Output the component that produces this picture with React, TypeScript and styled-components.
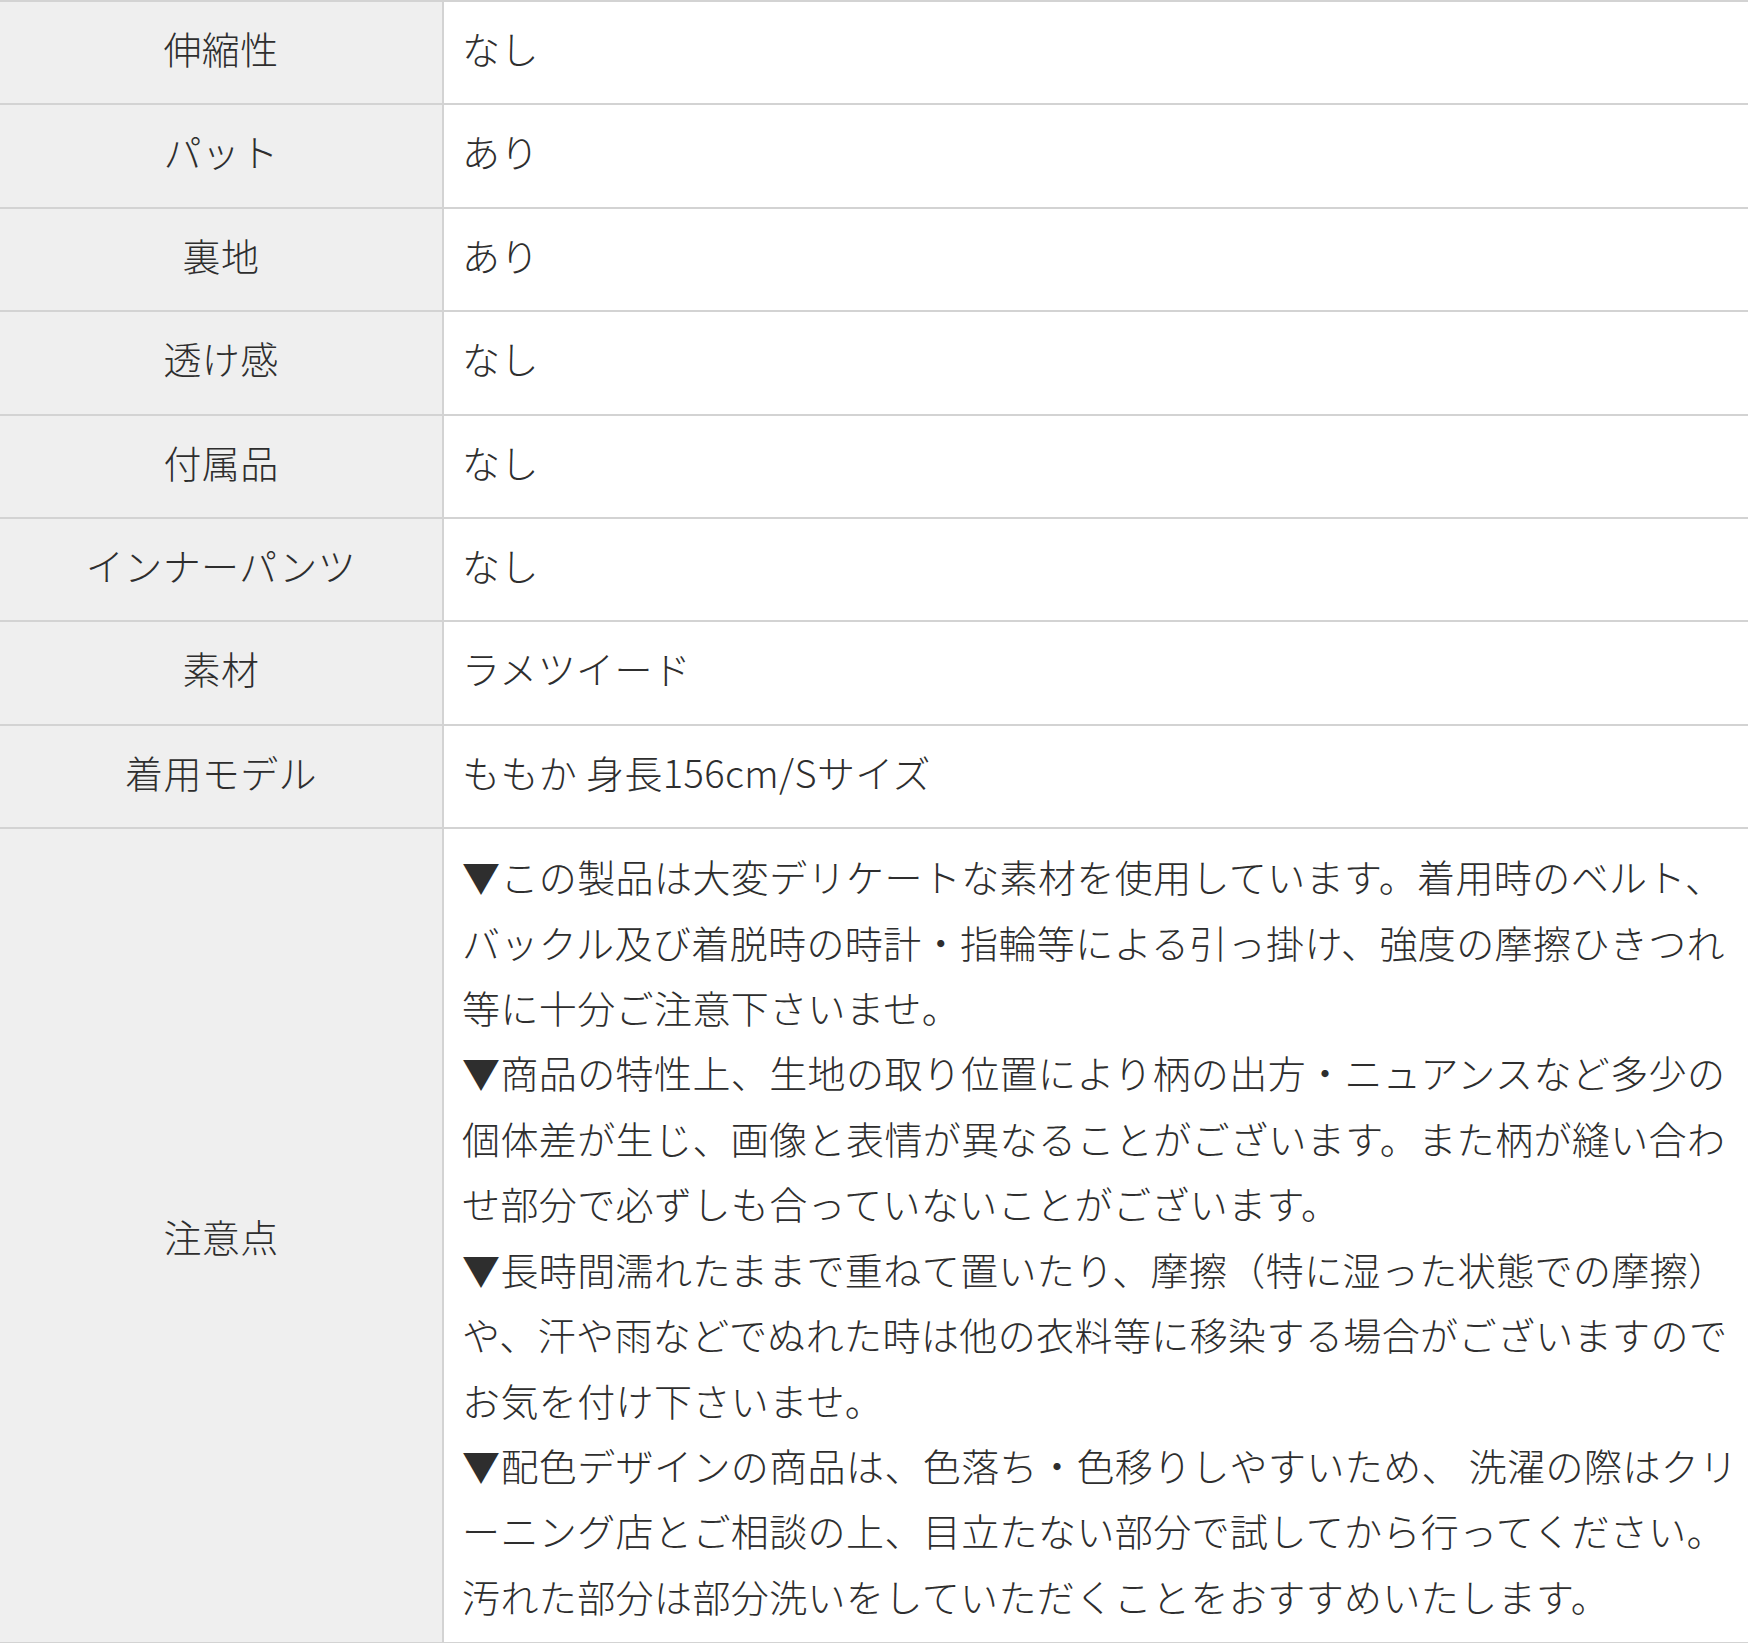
import React from "react";
import styled, { createGlobalStyle } from "styled-components";

const GlobalStyle = createGlobalStyle`
  html, body {
    margin: 0;
    padding: 0;
    background: #fff;
  }

  body {
    font-family: "Noto Sans CJK JP", "Noto Sans", sans-serif;
    font-weight: 300;
    color: #2e2e2e;
  }
`;

const SpecTable = styled.div`
  width: 100%;
  border-top: 2px solid #d3d3d3;
`;

const Row = styled.div`
  display: grid;
  grid-template-columns: 444px 1fr;
  border-bottom: 2px solid #d3d3d3;
`;

const Label = styled.div<{ $notes?: boolean }>`
  display: flex;
  align-items: center;
  justify-content: center;
  padding-bottom: ${(p) => (p.$notes ? "0" : "10px")};
  background: #efefef;
  border-right: 2px solid #d3d3d3;
  font-size: 38px;
  line-height: 65.4px;
  letter-spacing: 0.4px;
  text-align: center;
`;

const Value = styled.div<{ $notes?: boolean }>`
  padding: ${(p) => (p.$notes ? "14px 16px 14px 18px" : "13px 16px 23px 18px")};
  font-size: 38px;
  line-height: 65.4px;
  letter-spacing: 0.4px;
  background: #fff;
`;

const NoteLine = styled.span`
  display: block;
  white-space: nowrap;
`;

const specs: [string, string][] = [
  ["伸縮性", "なし"],
  ["パット", "あり"],
  ["裏地", "あり"],
  ["透け感", "なし"],
  ["付属品", "なし"],
  ["インナーパンツ", "なし"],
  ["素材", "ラメツイード"],
  ["着用モデル", "ももか 身長156cm/Sサイズ"],
];

const notes: string[] = [
  "▼この製品は大変デリケートな素材を使用しています。着用時のベルト、",
  "バックル及び着脱時の時計・指輪等による引っ掛け、強度の摩擦ひきつれ",
  "等に十分ご注意下さいませ。",
  "▼商品の特性上、生地の取り位置により柄の出方・ニュアンスなど多少の",
  "個体差が生じ、画像と表情が異なることがございます。また柄が縫い合わ",
  "せ部分で必ずしも合っていないことがございます。",
  "▼長時間濡れたままで重ねて置いたり、摩擦（特に湿った状態での摩擦）",
  "や、汗や雨などでぬれた時は他の衣料等に移染する場合がございますので",
  "お気を付け下さいませ。",
  "▼配色デザインの商品は、色落ち・色移りしやすいため、 洗濯の際はクリ",
  "ーニング店とご相談の上、目立たない部分で試してから行ってください。",
  "汚れた部分は部分洗いをしていただくことをおすすめいたします。",
];

const App: React.FC = () => {
  return (
    <>
      <GlobalStyle />
      <SpecTable>
        {specs.map(([label, value]) => (
          <Row key={label}>
            <Label>{label}</Label>
            <Value>{value}</Value>
          </Row>
        ))}
        <Row>
          <Label $notes>注意点</Label>
          <Value $notes>
            {notes.map((line, i) => (
              <NoteLine key={i}>{line}</NoteLine>
            ))}
          </Value>
        </Row>
      </SpecTable>
    </>
  );
};

export default App;
